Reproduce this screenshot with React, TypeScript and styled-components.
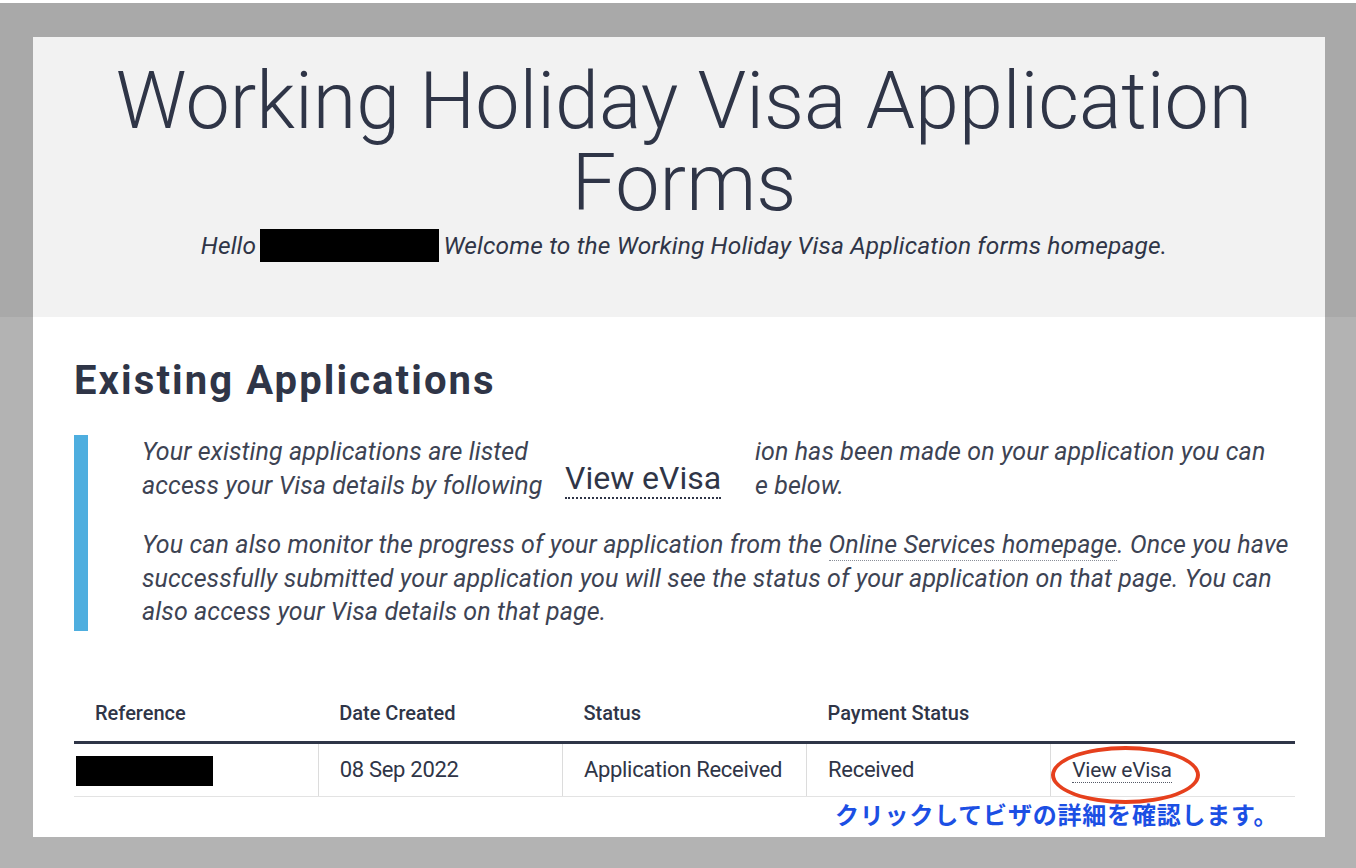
import React from "react";
import styled, { createGlobalStyle } from "styled-components";

const GlobalStyle = createGlobalStyle`
  html, body { margin: 0; padding: 0; background: #ffffff; }
  body { font-family: "Fira Sans", Roboto, "Open Sans", sans-serif; }
  * { box-sizing: border-box; }
`;

const Frame = styled.div`
  margin-top: 3px;
  height: 865px;
  padding: 34px 31px 31px 33px;
  background: linear-gradient(to bottom, #a9a9a9 0, #a9a9a9 314px, #b3b3b3 314px, #b3b3b3 100%);
`;

const Panel = styled.main`
  height: 800px;
  background: #ffffff;
  display: flex;
  flex-direction: column;
  color: #2f3547;
`;

const Hero = styled.header`
  height: 280px;
  flex: none;
  background: #f2f2f2;
  padding: 23px 0 0 10px;
  text-align: center;
`;

const Title = styled.h1`
  margin: 0;
  font-family: Roboto, "Open Sans", sans-serif;
  font-weight: 300;
  font-size: 79px;
  line-height: 82px;
  color: #2f3547;
`;

const TitleLine = styled.span`
  display: block;
`;

const Greeting = styled.p`
  margin: 7px 0 0;
  font-family: Roboto, sans-serif;
  font-style: italic;
  font-size: 24.5px;
  line-height: 30px;
  letter-spacing: 0.15px;
  color: #2f3547;
`;

const Redacted = styled.span<{ $w: number; $h: number }>`
  display: inline-block;
  width: ${(p) => p.$w}px;
  height: ${(p) => p.$h}px;
  background: #000;
  vertical-align: middle;
`;

const NameBlock = styled(Redacted)`
  margin: -4px 4px 0 -2px;
`;

const Content = styled.section`
  padding: 40px 30px 0 41px;
  display: flex;
  flex-direction: column;
`;

const SectionTitle = styled.h2`
  margin: 0;
  font-family: Roboto, sans-serif;
  font-weight: 700;
  font-size: 40px;
  line-height: 48px;
  letter-spacing: 2.1px;
  color: #2f3547;
`;

const Callout = styled.div`
  margin-top: 30px;
  border-left: 14px solid #4eaedf;
  padding: 0 0 2px 54px;
  font-family: Roboto, sans-serif;
  font-style: italic;
  font-size: 25px;
  letter-spacing: 0.1px;
  color: #3d4353;
`;

const IntroGrid = styled.div`
  display: grid;
  grid-template-columns: 405px 208px 1fr;
  grid-template-rows: 34px 34px;
  line-height: 34px;
  white-space: nowrap;
`;

const LeadCell = styled.span<{ $row: number }>`
  grid-column: 1;
  grid-row: ${(p) => p.$row};
`;

const TailCell = styled.span<{ $row: number }>`
  grid-column: 3;
  grid-row: ${(p) => p.$row};
`;

const Magnifier = styled.div`
  grid-column: 2;
  grid-row: 1 / span 2;
  background: #ffffff;
  padding: 24px 0 0 18px;
  font-style: normal;
  letter-spacing: 0;
`;

const BigLink = styled.span`
  display: inline-block;
  font-size: 32px;
  line-height: 38px;
  color: #2f3547;
  border-bottom: 2px dotted #2f3547;
`;

const Para = styled.p`
  margin: 25px 0 0;
  line-height: 33.6px;
  white-space: nowrap;
`;

const DottedLink = styled.a`
  color: inherit;
  text-decoration: none;
  border-bottom: 1px dotted #8a8e98;
  padding-bottom: 1px;
`;

const Table = styled.table`
  margin-top: 56px;
  width: 1221px;
  border-collapse: collapse;
  table-layout: fixed;
  font-family: Roboto, sans-serif;
`;

const Th = styled.th`
  text-align: left;
  font-weight: 500;
  font-size: 20px;
  line-height: 24px;
  padding: 14px 20px 16px 21px;
  color: #2f3547;
  border-bottom: 3px solid #2f3547;
`;

const Td = styled.td<{ $circled?: boolean; $first?: boolean }>`
  position: relative;
  height: 52px;
  padding: 0 10px 0 ${(p) => (p.$first ? 2 : 21)}px;
  font-size: 22px;
  line-height: 51px;
  letter-spacing: -0.3px;
  color: #2f3547;
  vertical-align: middle;
  border-bottom: 1px solid #e3e3e3;
  border-left: ${(p) => (p.$first ? "none" : "1px solid #dcdcdc")};
  &::after {
    content: "";
    display: ${(p) => (p.$circled ? "block" : "none")};
    position: absolute;
    left: 0;
    top: 2px;
    width: 141px;
    height: 50px;
    border: 4px solid #e6401d;
    border-radius: 50%;
  }
`;

const RowLink = styled.a`
  color: #2f3547;
  text-decoration: none;
  border-bottom: 1px dotted #555a66;
  font-size: 21px;
`;

const Caption = styled.p`
  margin: 3px 0 0 761px;
  font-family: "Noto Sans CJK JP", sans-serif;
  font-weight: 700;
  font-size: 24px;
  line-height: 28px;
  letter-spacing: 0.8px;
  color: #1c4fe4;
  white-space: nowrap;
`;

export default function App() {
  return (
    <>
      <GlobalStyle />
      <Frame>
        <Panel>
          <Hero>
            <Title>
              <TitleLine>Working Holiday Visa Application</TitleLine>
              <TitleLine>Forms</TitleLine>
            </Title>
            <Greeting>
              Hello <NameBlock $w={179} $h={33} />Welcome to the Working Holiday Visa Application forms homepage.
            </Greeting>
          </Hero>
          <Content>
            <SectionTitle>Existing Applications</SectionTitle>
            <Callout>
              <IntroGrid>
                <LeadCell $row={1}>Your existing applications are listed</LeadCell>
                <LeadCell $row={2}>access your Visa details by following</LeadCell>
                <Magnifier>
                  <BigLink>View eVisa</BigLink>
                </Magnifier>
                <TailCell $row={1}>ion has been made on your application you can</TailCell>
                <TailCell $row={2}>e below.</TailCell>
              </IntroGrid>
              <Para>
                You can also monitor the progress of your application from the{" "}
                <DottedLink href="#">Online Services homepage</DottedLink>. Once you have
                <br />
                successfully submitted your application you will see the status of your application on that page. You can
                <br />
                also access your Visa details on that page.
              </Para>
            </Callout>
            <Table>
              <thead>
                <tr>
                  <Th>Reference</Th>
                  <Th>Date Created</Th>
                  <Th>Status</Th>
                  <Th>Payment Status</Th>
                  <Th />
                </tr>
              </thead>
              <tbody>
                <tr>
                  <Td $first>
                    <Redacted $w={137} $h={30} />
                  </Td>
                  <Td>08 Sep 2022</Td>
                  <Td>Application Received</Td>
                  <Td>Received</Td>
                  <Td $circled>
                    <RowLink href="#">View eVisa</RowLink>
                  </Td>
                </tr>
              </tbody>
            </Table>
            <Caption>クリックしてビザの詳細を確認します。</Caption>
          </Content>
        </Panel>
      </Frame>
    </>
  );
}
